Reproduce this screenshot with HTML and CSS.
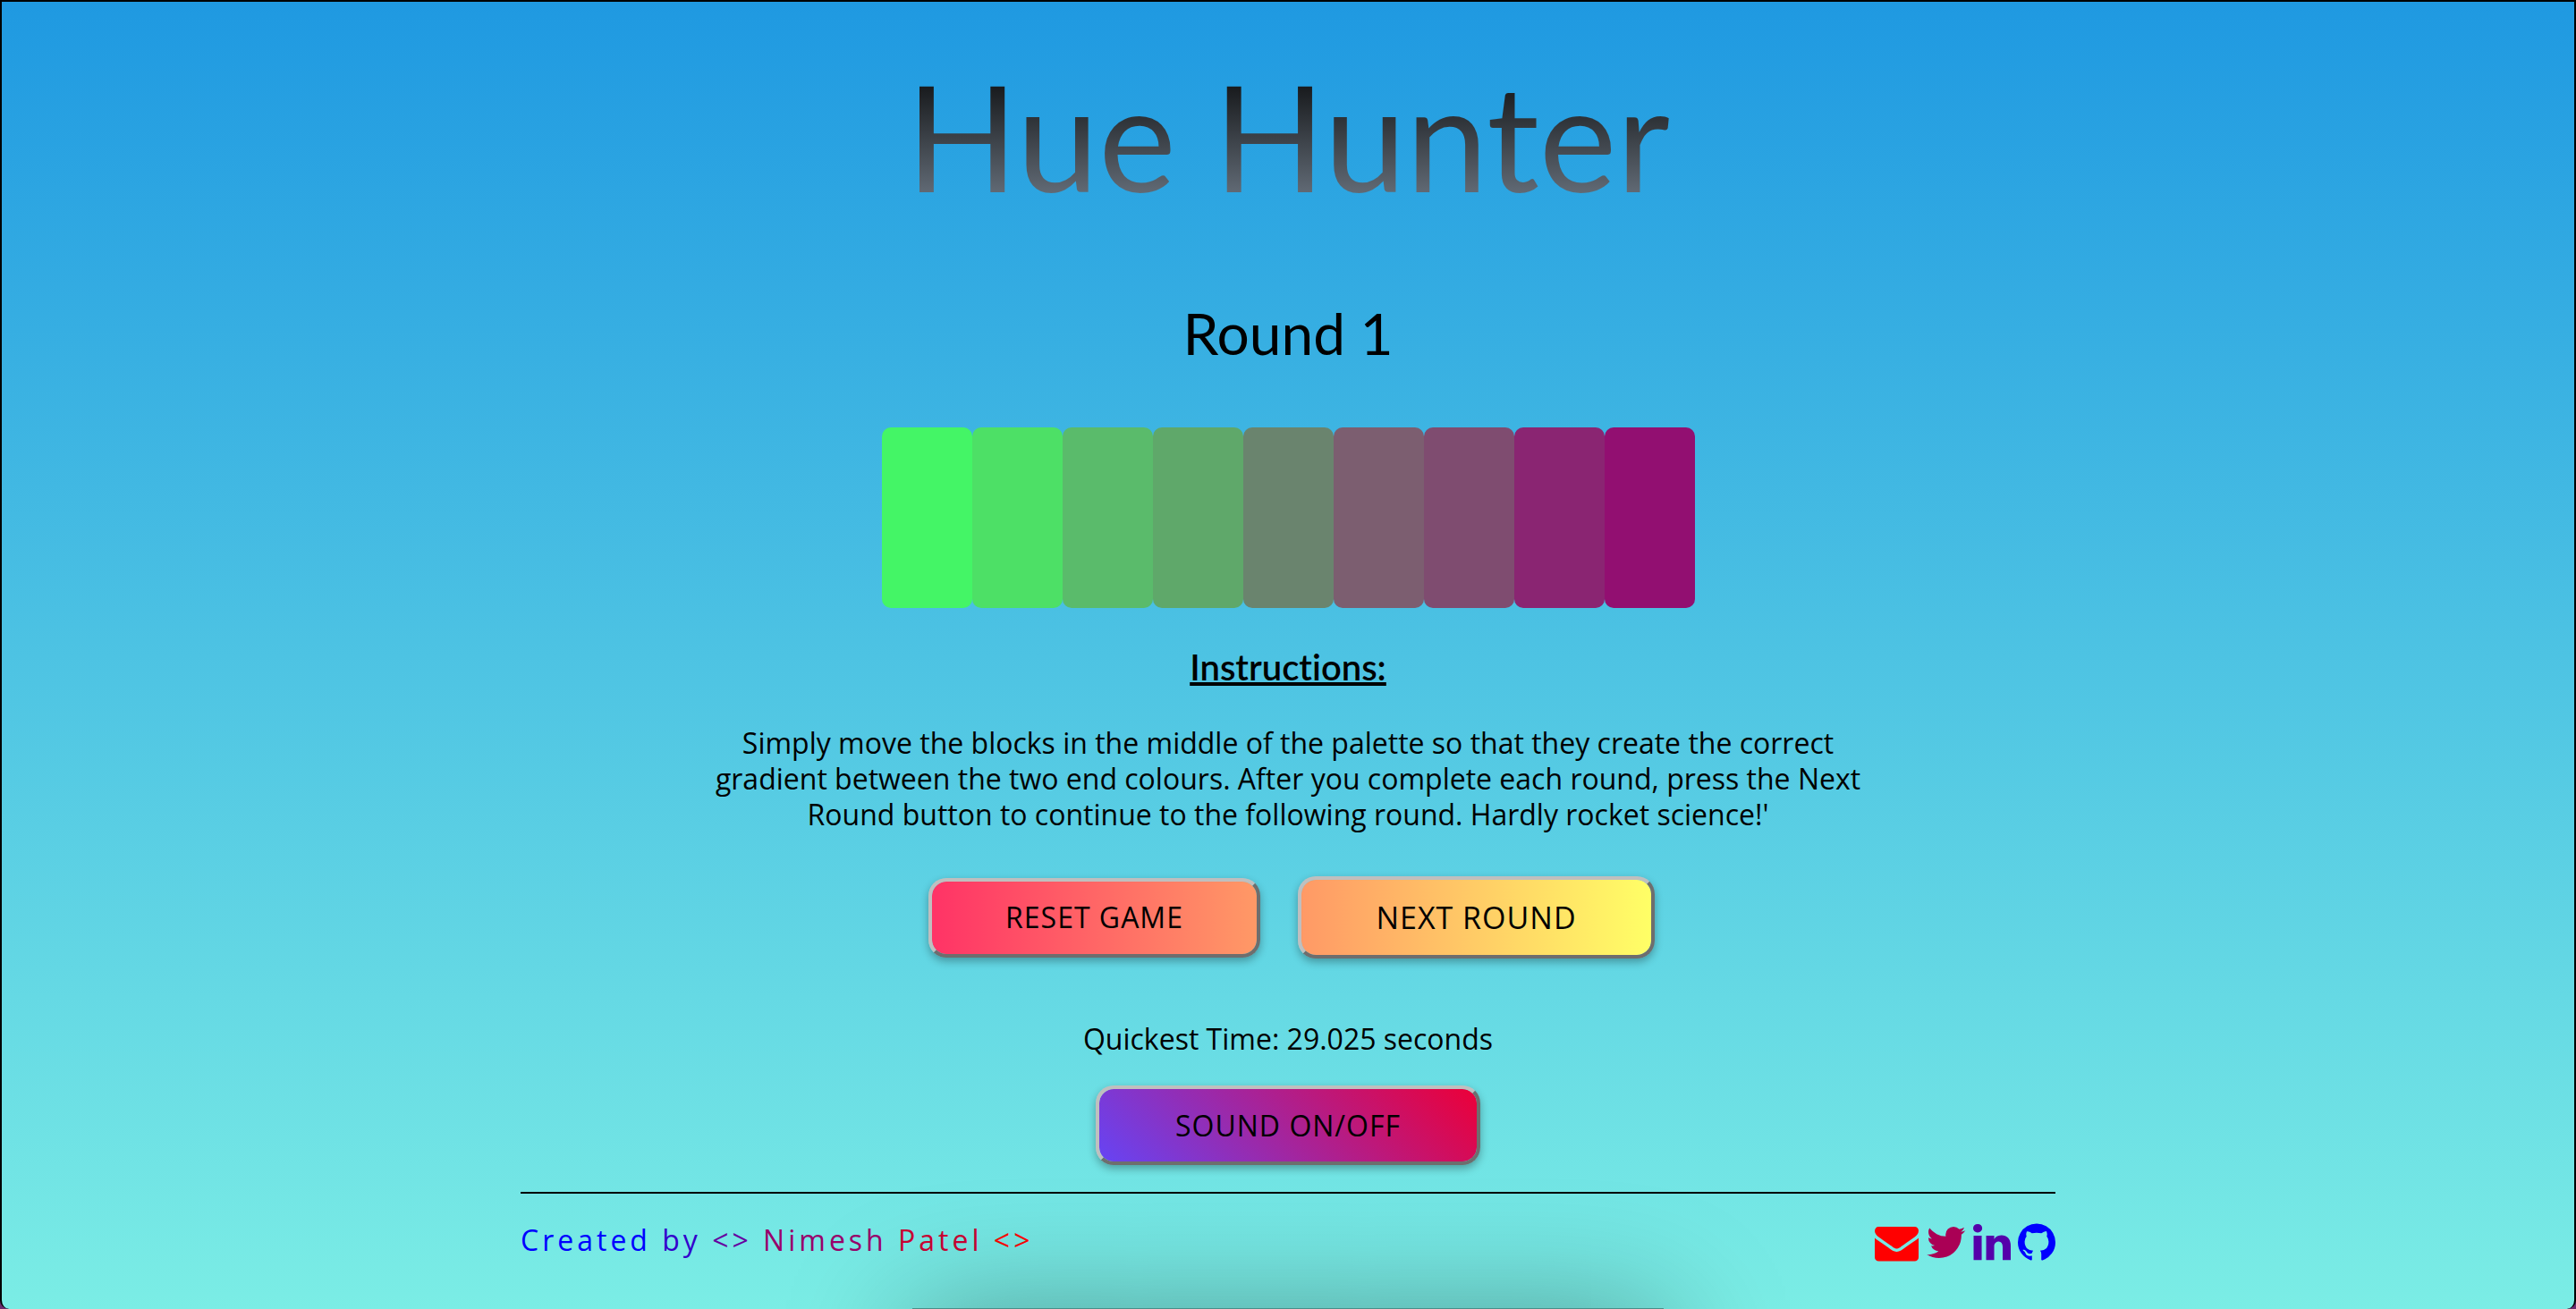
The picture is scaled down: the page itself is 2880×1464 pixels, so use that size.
FILE: index.html
```html
<!DOCTYPE html>
<html lang="en">
<head>
<meta charset="utf-8">
<meta name="viewport" content="width=device-width, initial-scale=1">
<title>Hue Hunter</title>
<link rel="stylesheet" href="styles.css">
</head>
<body>
<div class="page">
  <header class="header">
    <h1 class="title">Hue Hunter</h1>
  </header>
  <main class="game">
    <h2 class="round">Round 1</h2>
    <div class="palette">
      <div class="block block-1"></div>
      <div class="block block-2"></div>
      <div class="block block-3"></div>
      <div class="block block-4"></div>
      <div class="block block-5"></div>
      <div class="block block-6"></div>
      <div class="block block-7"></div>
      <div class="block block-8"></div>
      <div class="block block-9"></div>
    </div>
    <h3 class="instructions-title">Instructions:</h3>
    <p class="instructions">Simply move the blocks in the middle of the palette so that they create the correct gradient between the two end colours. After you complete each round, press the Next Round button to continue to the following round. Hardly rocket science!'</p>
    <div class="controls">
      <button type="button" class="button button-reset">RESET GAME</button>
      <button type="button" class="button button-next">NEXT ROUND</button>
    </div>
    <p class="best-time">Quickest Time: 29.025 seconds</p>
    <button type="button" class="button button-sound">SOUND ON/OFF</button>
  </main>
  <footer class="footer">
    <p class="credit"><span class="tone-1">Created</span> <span class="tone-2">by</span> <span class="tone-3">&lt;&gt;</span> <span class="tone-4">Nimesh</span> <span class="tone-5">Patel</span> <span class="tone-6">&lt;&gt;</span></p>
    <nav class="social" aria-label="Contact">
      <a class="social-link mail" href="#mail" aria-label="Email"><svg class="icon" viewBox="0 0 1792 1792"><path d="M1792 710v794q0 66-47 113t-113 47h-1472q-66 0-113-47t-47-113v-794q44 49 101 87 362 246 497 345 57 42 92.500 65.500t94.500 48 110 24.500h2q51 0 110-24.500t94.500-48 92.500-65.500q170-123 498-345 57-39 100-87zm0-294q0 79-49 151t-122 123q-376 261-468 325-10 7-42.500 31t-54 38.500-52 32.500-57.500 27-50 9h-2q-23 0-50-9t-57.500-27-52-32.500-54-38.500-42.500-31q-91-64-262-182.500t-205-142.500q-62-42-117-115.500t-55-136.500q0-78 41.500-130t118.500-52h1472q65 0 112.500 47t47.500 113z"/></svg></a>
      <a class="social-link twitter" href="#twitter" aria-label="Twitter"><svg class="icon" viewBox="64 0 1664 1792"><path d="M1684 408q-67 98-162 167 1 14 1 42 0 130-38 259.500t-115.500 248.500-184.500 210.500-258 146-323 54.500q-271 0-496-145 35 4 78 4 225 0 401-138-105-2-188-64.500t-114-159.500q33 5 61 5 43 0 85-11-112-23-185.500-111.500t-73.500-205.500v-4q68 38 146 41-66-44-105-115t-39-154q0-88 44-163 121 149 294.500 238.500t371.500 99.500q-8-38-8-74 0-134 94.500-228.500t228.500-94.500q140 0 236 102 109-21 205-78-37 115-142 178 93-10 186-50z"/></svg></a>
      <a class="social-link linkedin" href="#linkedin" aria-label="LinkedIn"><svg class="icon" viewBox="128 0 1536 1792"><path d="M477 625v991h-330v-991h330zm21-306q1 73-50.500 122t-135.500 49h-2q-82 0-132-49t-50-122q0-74 51.500-122.500t134.500-48.500 133 48.500 51 122.500zm1166 729v568h-329v-530q0-105-40.500-164.500t-126.500-59.500q-63 0-105.500 34.500t-63.500 85.500q-11 30-11 81v553h-329q2-399 2-647t-1-296l-1-48h329v144h-2q20-32 41-56t56.500-52 87-43.500 114.500-15.500q171 0 275 113.500t104 332.500z"/></svg></a>
      <a class="social-link github" href="#github" aria-label="GitHub"><svg class="icon" viewBox="128 0 1536 1792"><path d="M896 128q209 0 385.500 103t279.500 279.500 103 385.500q0 251-146.500 451.500t-378.500 277.500q-27 5-40-7t-13-30q0-3 .5-76.500t.5-134.500q0-97-52-142 57-6 102.500-18t94-39 81-66.500 53-105 20.500-150.500q0-119-79-206 37-91-8-204-28-9-81 11t-92 44l-38 24q-93-26-192-26t-192 26q-16-11-42.500-27t-83.500-38.500-85-13.500q-45 113-8 204-79 87-79 206 0 85 20.500 150t52.500 105 80.500 67 94 39 102.500 18q-39 36-49 103-21 10-45 15t-57 5-65.500-21.500-55.500-62.500q-19-32-48.500-52t-49.500-24l-20-3q-21 0-29 4.500t-5 11.500 9 14 13 12l7 5q22 10 43.500 38t31.500 51l10 23q13 38 44 61.500t67 30 69.500 7 55.500-3.500l23-4q0 38 .5 88.500t.5 54.500q0 18-13 30t-40 7q-232-77-378.500-277.500t-146.500-451.500q0-209 103-385.500t279.500-279.500 385.500-103z"/></svg></a>
    </nav>
  </footer>
</div>
</body>
</html>
```
FILE: styles.css
```css
* {
  box-sizing: border-box;
}

html {
  background: #6b2c6e;
}

body {
  margin: 0;
  color: #000;
  font-family: "Open Sans", "Noto Sans", sans-serif;
  font-size: 32px;
  line-height: 40px;
}

h1, h2, h3, p {
  margin: 0;
}

.page {
  position: relative;
  display: flex;
  flex-direction: column;
  align-items: center;
  min-height: 100vh;
  overflow: hidden;
  padding: 54px 24px 0;
  border: 2px solid #000;
  border-bottom: 0;
  border-radius: 0 0 10px 10px;
  background: linear-gradient(#1f99e1, #7bede5);
}

/* soft shade along the bottom edge */
.page::after {
  content: "";
  position: absolute;
  top: calc(100% - 1px);
  left: 50%;
  width: 840px;
  height: 120px;
  margin-left: -420px;
  background: rgba(0, 0, 0, 0.4);
  box-shadow: 0 10px 140px rgba(0, 0, 0, 0.4);
}

.title {
  font: 400 164px/192px Lato, sans-serif;
  background: linear-gradient(#000, #747f8c);
  -webkit-background-clip: text;
  background-clip: text;
  color: transparent;
}

.game {
  display: flex;
  flex-direction: column;
  align-items: center;
  width: 100%;
  padding-top: 87px;
}

.round {
  font: 400 64px/76px Lato, sans-serif;
}

.palette {
  display: grid;
  grid-template-columns: repeat(9, 1fr);
  width: 100%;
  max-width: 909px;
  height: 202px;
  margin: 67px 0 42px;
}

.block {
  border-radius: 10px;
}

.block-1 { background: #44f566; }
.block-2 { background: #4de066; }
.block-3 { background: #5abb6b; }
.block-4 { background: #5fa86a; }
.block-5 { background: #6a846e; }
.block-6 { background: #7c5e70; }
.block-7 { background: #7f4c70; }
.block-8 { background: #8a2572; }
.block-9 { background: #920f71; }

.instructions-title {
  font: 600 40px/48px Lato, sans-serif;
  font-variant-ligatures: none;
  text-decoration: underline;
  text-decoration-thickness: 4px;
  text-decoration-skip-ink: none;
}

.instructions {
  max-width: 1290px;
  margin-top: 41px;
  text-align: center;
}

.controls {
  display: flex;
  flex-wrap: wrap;
  align-items: center;
  justify-content: center;
  gap: 42px;
  margin: 49px 0 70px;
  padding-left: 8px;
}

.button {
  height: 89px;
  padding: 0 80px;
  border: 4px solid;
  border-color: #bfbfbf #6e6e6e #6e6e6e #bfbfbf;
  border-radius: 20px;
  box-shadow: 0 4px 10px rgba(0, 0, 0, 0.3);
  color: #000;
  font: inherit;
  letter-spacing: 1px;
  cursor: pointer;
}

.button-reset {
  min-width: 371px;
  background: linear-gradient(90deg, #ff3366, #ff9966) padding-box;
}

.button-next {
  min-width: 399px;
  height: 92px;
  background: linear-gradient(90deg, #ff9966, #ffff66) padding-box;
  font-size: 34px;
}

.button-sound {
  min-width: 430px;
  margin-top: 32px;
  background: linear-gradient(45deg, #6644f4, #ec0038) padding-box;
}

.footer {
  display: flex;
  flex-wrap: wrap;
  justify-content: space-between;
  width: 100%;
  max-width: 1716px;
  margin-top: 30px;
  padding-top: 30px;
  border-top: 2px solid #000;
}

.credit {
  padding-top: 2px;
  font-weight: 500;
  letter-spacing: 4px;
}

.tone-1 { color: #0000ff; }
.tone-2 { color: #3300cc; }
.tone-3 { color: #6600a0; }
.tone-4 { color: #99006b; }
.tone-5 { color: #cc0033; }
.tone-6 { color: #ff0000; }

.social {
  display: flex;
  gap: 8px;
}

.social-link {
  display: flex;
}

.icon {
  height: 49px;
  fill: currentColor;
}

.mail { color: #ff0000; }
.twitter { color: #aa0055; }
.linkedin { color: #5500aa; }
.github { color: #0000ff; }
```
